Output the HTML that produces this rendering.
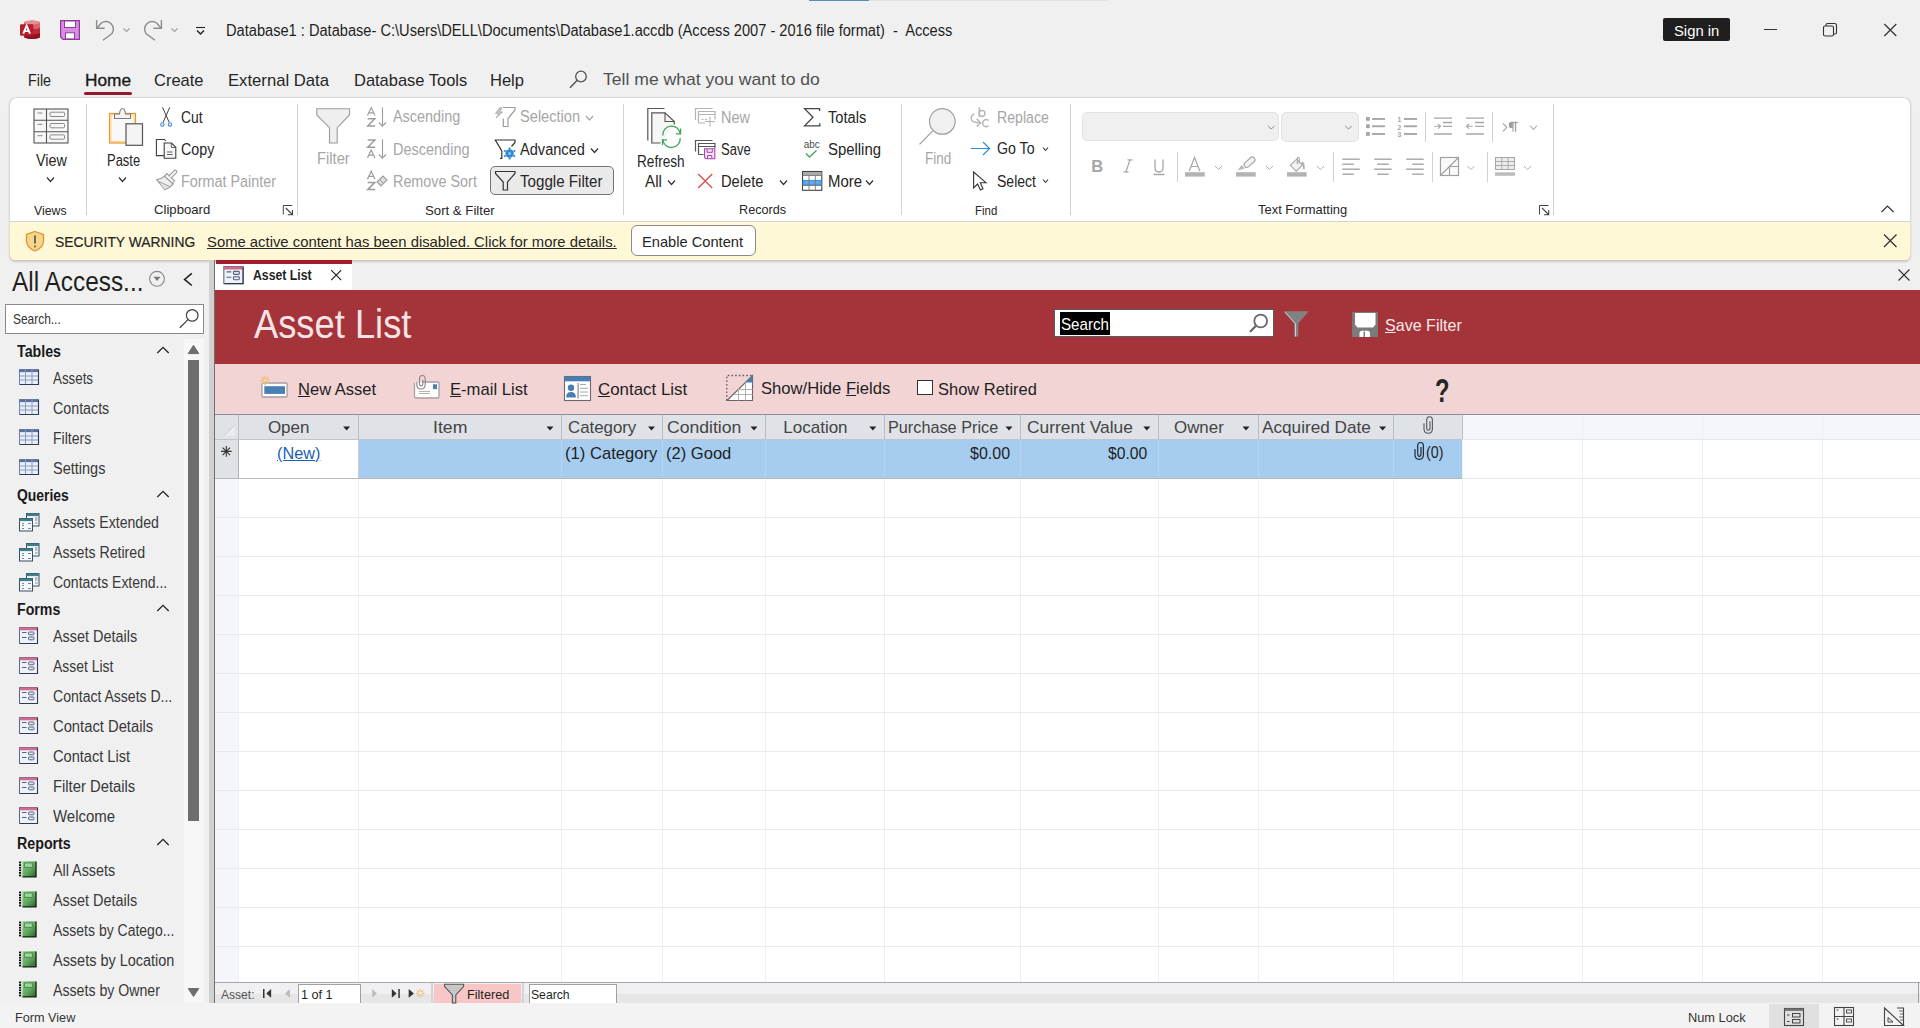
<!DOCTYPE html>
<html><head><meta charset="utf-8"><title>Access</title>
<style>
html,body{margin:0;padding:0;}
body{width:1920px;height:1028px;overflow:hidden;position:relative;background:#f0f0f0;font-family:"Liberation Sans",sans-serif;}
.t{position:absolute;white-space:pre;line-height:1;transform-origin:0 0;}
.r{position:absolute;}
.s{position:absolute;overflow:visible;}
u{text-decoration:underline;text-underline-offset:0.5px;text-decoration-thickness:1px;}
</style></head><body>
<div class="r" style="left:809px;top:0px;width:60px;height:1px;background:#5a8cc0;"></div>
<div class="r" style="left:869px;top:0px;width:240px;height:1px;background:#e3e3e3;"></div>
<div class="t" style="left:226.00px;top:22.76px;font-size:16px;color:#1f1f1f;transform:scaleX(0.9136);">Database1 : Database- C:\Users\DELL\Documents\Database1.accdb (Access 2007 - 2016 file format)  -  Access</div>
<div class="r" style="left:1663px;top:18px;width:67px;height:22.5px;background:#1f1f1f;border-radius:2px;"></div>
<div class="t" style="left:1674.00px;top:23.30px;font-size:15px;color:#ffffff;transform:scaleX(0.9869);">Sign in</div>
<div class="t" style="left:28.00px;top:71.61px;font-size:17px;color:#262626;transform:scaleX(0.8394);">File</div>
<div class="t" style="left:85.00px;top:71.61px;font-size:17px;color:#1a1a1a;transform:scaleX(1.0155);-webkit-text-stroke:0.35px #1a1a1a;">Home</div>
<div class="r" style="left:84px;top:92px;width:48px;height:3px;background:#911b2b;border-radius:2px;"></div>
<div class="t" style="left:154.00px;top:71.61px;font-size:17px;color:#262626;transform:scaleX(0.9706);">Create</div>
<div class="t" style="left:227.50px;top:71.61px;font-size:17px;color:#262626;transform:scaleX(0.9806);">External Data</div>
<div class="t" style="left:353.50px;top:71.61px;font-size:17px;color:#262626;transform:scaleX(0.9683);">Database Tools</div>
<div class="t" style="left:490.00px;top:71.61px;font-size:17px;color:#262626;transform:scaleX(0.9714);">Help</div>
<div class="t" style="left:603.40px;top:71.31px;font-size:17px;color:#505050;transform:scaleX(1.0338);">Tell me what you want to do</div>
<div class="r" style="left:9px;top:97px;width:1902px;height:163px;background:#ffffff;box-sizing:border-box;border:1px solid #dadada;border-bottom:none;border-radius:8px 8px 6px 6px;box-shadow:0 1.5px 2px rgba(0,0,0,0.16);"></div>
<div class="r" style="left:10px;top:221px;width:1900px;height:1px;background:#d4d4d4;"></div>
<div class="r" style="left:9px;top:222px;width:1902px;height:38px;background:#fff8d6;box-sizing:border-box;border:1px solid #e6e0c8;border-top:none;border-bottom:none;border-radius:0 0 6px 6px;"></div>
<div class="r" style="left:86px;top:104px;width:1px;height:111px;background:#d2d2d2;"></div>
<div class="r" style="left:297px;top:104px;width:1px;height:111px;background:#d2d2d2;"></div>
<div class="r" style="left:623px;top:104px;width:1px;height:111px;background:#d2d2d2;"></div>
<div class="r" style="left:901px;top:104px;width:1px;height:111px;background:#d2d2d2;"></div>
<div class="r" style="left:1070px;top:104px;width:1px;height:111px;background:#d2d2d2;"></div>
<div class="r" style="left:1553px;top:104px;width:1px;height:111px;background:#d2d2d2;"></div>
<div class="t" style="left:35.80px;top:152.76px;font-size:16px;color:#262626;transform:scaleX(0.8953);">View</div>
<div class="t" style="left:34.00px;top:204.17px;font-size:13.5px;color:#262626;transform:scaleX(0.9106);">Views</div>
<div class="t" style="left:106.60px;top:152.76px;font-size:16px;color:#262626;transform:scaleX(0.8093);">Paste</div>
<div class="t" style="left:181.40px;top:110.16px;font-size:16px;color:#262626;transform:scaleX(0.8675);">Cut</div>
<div class="t" style="left:181.40px;top:142.16px;font-size:16px;color:#262626;transform:scaleX(0.8904);">Copy</div>
<div class="t" style="left:181.40px;top:173.96px;font-size:16px;color:#a6a6a6;transform:scaleX(0.8979);">Format Painter</div>
<div class="t" style="left:153.75px;top:203.37px;font-size:13.5px;color:#262626;transform:scaleX(0.9732);">Clipboard</div>
<div class="t" style="left:317.00px;top:150.76px;font-size:16px;color:#a6a6a6;transform:scaleX(0.9213);">Filter</div>
<div class="t" style="left:392.80px;top:109.46px;font-size:16px;color:#a6a6a6;transform:scaleX(0.8996);">Ascending</div>
<div class="t" style="left:392.80px;top:142.16px;font-size:16px;color:#a6a6a6;transform:scaleX(0.9053);">Descending</div>
<div class="t" style="left:392.80px;top:173.96px;font-size:16px;color:#a6a6a6;transform:scaleX(0.8983);">Remove Sort</div>
<div class="t" style="left:520.40px;top:109.46px;font-size:16px;color:#a6a6a6;transform:scaleX(0.9134);">Selection</div>
<div class="t" style="left:520.40px;top:142.16px;font-size:16px;color:#262626;transform:scaleX(0.9115);">Advanced</div>
<div class="r" style="left:490.3px;top:166.2px;width:123.4px;height:29.2px;background:#eaeaea;box-sizing:border-box;border:1px solid #747474;border-radius:5px;"></div>
<div class="t" style="left:520.40px;top:173.96px;font-size:16px;color:#262626;transform:scaleX(0.9460);">Toggle Filter</div>
<div class="t" style="left:425.00px;top:203.67px;font-size:13.5px;color:#262626;transform:scaleX(0.9776);">Sort &amp; Filter</div>
<div class="t" style="left:636.60px;top:153.66px;font-size:16px;color:#262626;transform:scaleX(0.8500);">Refresh</div>
<div class="t" style="left:645.40px;top:174.06px;font-size:16px;color:#262626;transform:scaleX(0.9494);">All</div>
<div class="t" style="left:721.00px;top:109.86px;font-size:16px;color:#a6a6a6;transform:scaleX(0.9034);">New</div>
<div class="t" style="left:721.00px;top:141.86px;font-size:16px;color:#262626;transform:scaleX(0.8137);">Save</div>
<div class="t" style="left:721.00px;top:174.06px;font-size:16px;color:#262626;transform:scaleX(0.9179);">Delete</div>
<div class="t" style="left:827.70px;top:109.86px;font-size:16px;color:#262626;transform:scaleX(0.9163);">Totals</div>
<div class="t" style="left:827.70px;top:141.86px;font-size:16px;color:#262626;transform:scaleX(0.9297);">Spelling</div>
<div class="t" style="left:827.70px;top:174.06px;font-size:16px;color:#262626;transform:scaleX(0.9315);">More</div>
<div class="t" style="left:738.60px;top:203.37px;font-size:13.5px;color:#262626;transform:scaleX(0.9364);">Records</div>
<div class="t" style="left:924.70px;top:150.76px;font-size:16px;color:#a6a6a6;transform:scaleX(0.8457);">Find</div>
<div class="t" style="left:996.60px;top:109.96px;font-size:16px;color:#a6a6a6;transform:scaleX(0.8842);">Replace</div>
<div class="t" style="left:996.60px;top:141.46px;font-size:16px;color:#262626;transform:scaleX(0.8868);">Go To</div>
<div class="t" style="left:996.60px;top:173.56px;font-size:16px;color:#262626;transform:scaleX(0.8764);">Select</div>
<div class="t" style="left:974.70px;top:203.77px;font-size:13.5px;color:#262626;transform:scaleX(0.8479);">Find</div>
<div class="r" style="left:1081.5px;top:112.2px;width:197px;height:29.1px;background:#f0f0f0;box-sizing:border-box;border:1px solid #e3e3e3;border-radius:5px;"></div>
<div class="r" style="left:1281.3px;top:112px;width:77.5px;height:29.5px;background:#f0f0f0;box-sizing:border-box;border:1px solid #e3e3e3;border-radius:5px;"></div>
<div class="t" style="left:1257.50px;top:203.07px;font-size:13.5px;color:#262626;transform:scaleX(0.9591);">Text Formatting</div>
<div class="t" style="left:54.70px;top:233.68px;font-size:15.5px;color:#262626;transform:scaleX(0.8947);-webkit-text-stroke:0.2px #262626;">SECURITY WARNING</div>
<div class="t" style="left:207.20px;top:234.20px;font-size:15px;color:#262626;transform:scaleX(0.9887);text-decoration:underline;text-underline-offset:1px;">Some active content has been disabled. Click for more details.</div>
<div class="r" style="left:631px;top:225.2px;width:124.7px;height:31.3px;background:#ffffff;box-sizing:border-box;border:1px solid #8a8a8a;border-radius:6px;"></div>
<div class="t" style="left:642.00px;top:234.20px;font-size:15px;color:#262626;transform:scaleX(0.9768);">Enable Content</div>
<div class="r" style="left:209px;top:261px;width:5px;height:742px;background:#d1d1d1;"></div>
<div class="r" style="left:214px;top:260px;width:1px;height:743px;background:#6f6f6f;"></div>
<div class="t" style="left:11.60px;top:268.30px;font-size:28px;color:#1f1f1f;transform:scaleX(0.8708);">All Access...</div>
<div class="r" style="left:5.2px;top:304px;width:198.6px;height:29.7px;background:#ffffff;box-sizing:border-box;border:1px solid #8a8a8a;"></div>
<div class="t" style="left:12.90px;top:311.73px;font-size:14.5px;color:#333333;transform:scaleX(0.8224);">Search...</div>
<div class="r" style="left:183.6px;top:338.8px;width:20px;height:664px;background:#f7f7f7;"></div>
<div class="r" style="left:188px;top:360px;width:11px;height:460.7px;background:#6e6e6e;"></div>
<div class="t" style="left:16.60px;top:343.96px;font-size:16px;color:#1a1a1a;font-weight:bold;transform:scaleX(0.8889);">Tables</div>
<div class="t" style="left:53.40px;top:371.36px;font-size:16px;color:#383838;transform:scaleX(0.8333);">Assets</div>
<div class="t" style="left:53.40px;top:401.36px;font-size:16px;color:#383838;transform:scaleX(0.8906);">Contacts</div>
<div class="t" style="left:53.40px;top:431.36px;font-size:16px;color:#383838;transform:scaleX(0.8761);">Filters</div>
<div class="t" style="left:53.40px;top:461.36px;font-size:16px;color:#383838;transform:scaleX(0.9066);">Settings</div>
<div class="t" style="left:16.60px;top:487.96px;font-size:16px;color:#1a1a1a;font-weight:bold;transform:scaleX(0.8691);">Queries</div>
<div class="t" style="left:53.40px;top:515.36px;font-size:16px;color:#383838;transform:scaleX(0.8818);">Assets Extended</div>
<div class="t" style="left:53.40px;top:545.36px;font-size:16px;color:#383838;transform:scaleX(0.8846);">Assets Retired</div>
<div class="t" style="left:53.40px;top:575.36px;font-size:16px;color:#383838;transform:scaleX(0.8738);">Contacts Extend...</div>
<div class="t" style="left:16.60px;top:601.96px;font-size:16px;color:#1a1a1a;font-weight:bold;transform:scaleX(0.8855);">Forms</div>
<div class="t" style="left:53.40px;top:629.36px;font-size:16px;color:#383838;transform:scaleX(0.9015);">Asset Details</div>
<div class="t" style="left:53.40px;top:659.36px;font-size:16px;color:#383838;transform:scaleX(0.8703);">Asset List</div>
<div class="t" style="left:53.40px;top:689.36px;font-size:16px;color:#383838;transform:scaleX(0.8766);">Contact Assets D...</div>
<div class="t" style="left:53.40px;top:719.36px;font-size:16px;color:#383838;transform:scaleX(0.9226);">Contact Details</div>
<div class="t" style="left:53.40px;top:749.36px;font-size:16px;color:#383838;transform:scaleX(0.9124);">Contact List</div>
<div class="t" style="left:53.40px;top:779.36px;font-size:16px;color:#383838;transform:scaleX(0.9246);">Filter Details</div>
<div class="t" style="left:53.40px;top:809.36px;font-size:16px;color:#383838;transform:scaleX(0.9352);">Welcome</div>
<div class="t" style="left:16.60px;top:835.96px;font-size:16px;color:#1a1a1a;font-weight:bold;transform:scaleX(0.8893);">Reports</div>
<div class="t" style="left:53.40px;top:863.36px;font-size:16px;color:#383838;transform:scaleX(0.8948);">All Assets</div>
<div class="t" style="left:53.40px;top:893.36px;font-size:16px;color:#383838;transform:scaleX(0.9015);">Asset Details</div>
<div class="t" style="left:53.40px;top:923.36px;font-size:16px;color:#383838;transform:scaleX(0.8745);">Assets by Catego...</div>
<div class="t" style="left:53.40px;top:953.36px;font-size:16px;color:#383838;transform:scaleX(0.9032);">Assets by Location</div>
<div class="t" style="left:53.40px;top:983.36px;font-size:16px;color:#383838;transform:scaleX(0.8842);">Assets by Owner</div>
<div class="r" style="left:215.5px;top:260px;width:136px;height:4px;background:#a51d2d;"></div>
<div class="r" style="left:215px;top:264px;width:136.5px;height:26px;background:#ffffff;"></div>
<div class="t" style="left:253.30px;top:268.15px;font-size:14px;color:#1f1f1f;font-weight:bold;transform:scaleX(0.8774);">Asset List</div>
<div class="r" style="left:215px;top:290px;width:1705px;height:74px;background:#a4343a;"></div>
<div class="t" style="left:253.90px;top:303.94px;font-size:40px;color:#f4e4e5;transform:scaleX(0.9077);">Asset List</div>
<div class="r" style="left:1054.4px;top:309.4px;width:220px;height:28px;background:#ffffff;box-sizing:border-box;border:1px solid #5a5a5a;"></div>
<div class="r" style="left:1060px;top:312.2px;width:50px;height:22.4px;background:#000000;"></div>
<div class="t" style="left:1061.00px;top:315.61px;font-size:17px;color:#ffffff;transform:scaleX(0.8905);">Search</div>
<div class="t" style="left:1384.90px;top:317.31px;font-size:17px;color:#f8e8e8;transform:scaleX(0.9446);"><u>S</u>ave Filter</div>
<div class="r" style="left:215px;top:364px;width:1705px;height:50px;background:#f2d4d5;"></div>
<div class="t" style="left:298.40px;top:380.61px;font-size:17px;color:#1f1f1f;transform:scaleX(0.9726);"><u>N</u>ew Asset</div>
<div class="t" style="left:450.00px;top:380.61px;font-size:17px;color:#1f1f1f;transform:scaleX(0.9773);"><u>E</u>-mail List</div>
<div class="t" style="left:598.30px;top:380.61px;font-size:17px;color:#1f1f1f;transform:scaleX(0.9933);"><u>C</u>ontact List</div>
<div class="t" style="left:761.40px;top:380.21px;font-size:17px;color:#1f1f1f;transform:scaleX(0.9773);">Show/Hide <u>F</u>ields</div>
<div class="r" style="left:917.2px;top:380.3px;width:15.6px;height:15.2px;background:#ffffff;box-sizing:border-box;border:1px solid #333;"></div>
<div class="t" style="left:937.80px;top:380.81px;font-size:17px;color:#1f1f1f;transform:scaleX(0.9687);">Show Retired</div>
<div class="t" style="left:1434.50px;top:372.72px;font-size:34px;color:#262626;font-weight:bold;transform:scaleX(0.6971);">?</div>
<div class="r" style="left:215px;top:414px;width:1705px;height:568px;background:#ffffff;"></div>
<div class="r" style="left:215px;top:414px;width:1705px;height:1px;background:#8c8c9c;"></div>
<div class="r" style="left:215px;top:415px;width:1247px;height:24px;background:#dfe2e7;"></div>
<div class="r" style="left:1462px;top:415px;width:458px;height:24px;background:#f5f6fc;"></div>
<div class="r" style="left:215px;top:479px;width:23px;height:503px;background:#f5f6fc;"></div>
<div class="r" style="left:215px;top:439px;width:23px;height:39px;background:#dfe2e7;"></div>
<div class="r" style="left:359px;top:440px;width:1103px;height:38px;background:#a6cdf0;"></div>
<div class="r" style="left:238px;top:415px;width:1px;height:567px;background:#efefef;"></div>
<div class="r" style="left:358px;top:415px;width:1px;height:567px;background:#efefef;"></div>
<div class="r" style="left:561px;top:415px;width:1px;height:567px;background:#efefef;"></div>
<div class="r" style="left:662px;top:415px;width:1px;height:567px;background:#efefef;"></div>
<div class="r" style="left:765px;top:415px;width:1px;height:567px;background:#efefef;"></div>
<div class="r" style="left:884px;top:415px;width:1px;height:567px;background:#efefef;"></div>
<div class="r" style="left:1020px;top:415px;width:1px;height:567px;background:#efefef;"></div>
<div class="r" style="left:1158px;top:415px;width:1px;height:567px;background:#efefef;"></div>
<div class="r" style="left:1258px;top:415px;width:1px;height:567px;background:#efefef;"></div>
<div class="r" style="left:1393px;top:415px;width:1px;height:567px;background:#efefef;"></div>
<div class="r" style="left:1462px;top:415px;width:1px;height:567px;background:#efefef;"></div>
<div class="r" style="left:1582px;top:415px;width:1px;height:567px;background:#efefef;"></div>
<div class="r" style="left:1702px;top:415px;width:1px;height:567px;background:#efefef;"></div>
<div class="r" style="left:1822px;top:415px;width:1px;height:567px;background:#efefef;"></div>
<div class="r" style="left:238px;top:415px;width:1px;height:24px;background:#b8bcc4;"></div>
<div class="r" style="left:358px;top:415px;width:1px;height:24px;background:#b8bcc4;"></div>
<div class="r" style="left:561px;top:415px;width:1px;height:24px;background:#b8bcc4;"></div>
<div class="r" style="left:662px;top:415px;width:1px;height:24px;background:#b8bcc4;"></div>
<div class="r" style="left:765px;top:415px;width:1px;height:24px;background:#b8bcc4;"></div>
<div class="r" style="left:884px;top:415px;width:1px;height:24px;background:#b8bcc4;"></div>
<div class="r" style="left:1020px;top:415px;width:1px;height:24px;background:#b8bcc4;"></div>
<div class="r" style="left:1158px;top:415px;width:1px;height:24px;background:#b8bcc4;"></div>
<div class="r" style="left:1258px;top:415px;width:1px;height:24px;background:#b8bcc4;"></div>
<div class="r" style="left:1393px;top:415px;width:1px;height:24px;background:#b8bcc4;"></div>
<div class="r" style="left:1462px;top:415px;width:1px;height:24px;background:#b8bcc4;"></div>
<div class="r" style="left:238px;top:439px;width:1px;height:39px;background:#b0b0b0;"></div>
<div class="r" style="left:358px;top:439px;width:1px;height:39px;background:#c8d0d8;"></div>
<div class="r" style="left:561px;top:440px;width:1px;height:38px;background:#b8d4ee;"></div>
<div class="r" style="left:662px;top:440px;width:1px;height:38px;background:#b8d4ee;"></div>
<div class="r" style="left:765px;top:440px;width:1px;height:38px;background:#b8d4ee;"></div>
<div class="r" style="left:884px;top:440px;width:1px;height:38px;background:#b8d4ee;"></div>
<div class="r" style="left:1020px;top:440px;width:1px;height:38px;background:#b8d4ee;"></div>
<div class="r" style="left:1158px;top:440px;width:1px;height:38px;background:#b8d4ee;"></div>
<div class="r" style="left:1258px;top:440px;width:1px;height:38px;background:#b8d4ee;"></div>
<div class="r" style="left:1393px;top:440px;width:1px;height:38px;background:#b8d4ee;"></div>
<div class="r" style="left:215px;top:439px;width:1247px;height:1px;background:#c4c4c4;"></div>
<div class="r" style="left:1462px;top:439px;width:458px;height:1px;background:#e8e8e8;"></div>
<div class="r" style="left:215px;top:478px;width:1247px;height:1px;background:#b8b8b8;"></div>
<div class="r" style="left:1462px;top:478px;width:458px;height:1px;background:#e8e8e8;"></div>
<div class="r" style="left:215px;top:517px;width:1705px;height:1px;background:#eaeaea;"></div>
<div class="r" style="left:215px;top:556px;width:1705px;height:1px;background:#eaeaea;"></div>
<div class="r" style="left:215px;top:595px;width:1705px;height:1px;background:#eaeaea;"></div>
<div class="r" style="left:215px;top:634px;width:1705px;height:1px;background:#eaeaea;"></div>
<div class="r" style="left:215px;top:673px;width:1705px;height:1px;background:#eaeaea;"></div>
<div class="r" style="left:215px;top:712px;width:1705px;height:1px;background:#eaeaea;"></div>
<div class="r" style="left:215px;top:751px;width:1705px;height:1px;background:#eaeaea;"></div>
<div class="r" style="left:215px;top:790px;width:1705px;height:1px;background:#eaeaea;"></div>
<div class="r" style="left:215px;top:829px;width:1705px;height:1px;background:#eaeaea;"></div>
<div class="r" style="left:215px;top:868px;width:1705px;height:1px;background:#eaeaea;"></div>
<div class="r" style="left:215px;top:907px;width:1705px;height:1px;background:#eaeaea;"></div>
<div class="r" style="left:215px;top:946px;width:1705px;height:1px;background:#eaeaea;"></div>
<div class="t" style="left:267.90px;top:418.81px;font-size:17px;color:#444444;">Open</div>
<div class="t" style="left:433.30px;top:418.81px;font-size:17px;color:#444444;transform:scaleX(1.0393);">Item</div>
<div class="t" style="left:568.40px;top:418.81px;font-size:17px;color:#444444;transform:scaleX(0.9899);">Category</div>
<div class="t" style="left:667.20px;top:418.81px;font-size:17px;color:#444444;transform:scaleX(1.0348);">Condition</div>
<div class="t" style="left:783.30px;top:418.81px;font-size:17px;color:#444444;">Location</div>
<div class="t" style="left:888.30px;top:418.81px;font-size:17px;color:#444444;transform:scaleX(0.9558);">Purchase Price</div>
<div class="t" style="left:1027.00px;top:418.81px;font-size:17px;color:#444444;transform:scaleX(1.0212);">Current Value</div>
<div class="t" style="left:1174.20px;top:418.81px;font-size:17px;color:#444444;transform:scaleX(0.9940);">Owner</div>
<div class="t" style="left:1262.20px;top:418.81px;font-size:17px;color:#444444;transform:scaleX(1.0102);">Acquired Date</div>
<div class="t" style="left:277.40px;top:444.61px;font-size:17px;color:#1d5fb4;transform:scaleX(0.9558);text-decoration:underline;text-underline-offset:1px;">(New)</div>
<div class="t" style="left:565.40px;top:444.61px;font-size:17px;color:#1f1f1f;transform:scaleX(0.9767);">(1) Category</div>
<div class="t" style="left:666.40px;top:444.61px;font-size:17px;color:#1f1f1f;transform:scaleX(0.9732);">(2) Good</div>
<div class="t" style="left:970.00px;top:444.61px;font-size:17px;color:#1f1f1f;transform:scaleX(0.9412);">$0.00</div>
<div class="t" style="left:1108.40px;top:444.61px;font-size:17px;color:#1f1f1f;transform:scaleX(0.9224);">$0.00</div>
<div class="t" style="left:1426.00px;top:444.11px;font-size:17px;color:#1f1f1f;transform:scaleX(0.8413);">(0)</div>
<div class="r" style="left:215px;top:982px;width:1705px;height:1px;background:#a8a8a8;"></div>
<div class="r" style="left:215px;top:983px;width:1705px;height:11px;background:#f0f0f2;"></div>
<div class="r" style="left:215px;top:994px;width:1705px;height:9px;background:#e6e6e6;"></div>
<div class="t" style="left:221.20px;top:987.90px;font-size:13px;color:#555555;transform:scaleX(0.9280);">Asset:</div>
<div class="r" style="left:298px;top:984px;width:63px;height:19px;background:#ffffff;box-sizing:border-box;border:1px solid #a0a0a0;border-bottom:none;"></div>
<div class="t" style="left:301.00px;top:987.70px;font-size:13px;color:#1f1f1f;transform:scaleX(0.9723);">1 of 1</div>
<div class="r" style="left:431px;top:983px;width:2px;height:20px;background:#d4d4d4;"></div>
<div class="r" style="left:434px;top:984px;width:87px;height:19px;background:#f8c6c6;"></div>
<div class="t" style="left:467.40px;top:987.70px;font-size:13px;color:#1f1f1f;transform:scaleX(0.9746);">Filtered</div>
<div class="r" style="left:522px;top:983px;width:2px;height:20px;background:#d4d4d4;"></div>
<div class="r" style="left:529px;top:984px;width:88px;height:19px;background:#ffffff;box-sizing:border-box;border:1px solid #a0a0a0;border-bottom:none;"></div>
<div class="t" style="left:531.00px;top:987.70px;font-size:13px;color:#1f1f1f;transform:scaleX(0.9369);">Search</div>
<div class="r" style="left:1918px;top:982px;width:1px;height:21px;background:#a0a0a0;"></div>
<div class="r" style="left:0px;top:1003px;width:1920px;height:25px;background:#f3f3f3;"></div>
<div class="t" style="left:15.40px;top:1011.00px;font-size:13px;color:#333333;transform:scaleX(0.9742);">Form View</div>
<div class="t" style="left:1687.60px;top:1011.00px;font-size:13px;color:#333333;transform:scaleX(0.9846);">Num Lock</div>
<div class="r" style="left:1769px;top:1004px;width:49.8px;height:24px;background:#e0e0e0;"></div>
<svg class="s" style="left:20px;top:20px;" width="20" height="20" viewBox="0 0 20 20">
      <path d="M4.3 2.3 Q12.2 -0.6 20 2.3 V17.6 Q12.2 20.6 4.3 17.6 Z" fill="#a81b2b"/>
      <path d="M4.3 2.3 Q12.2 -0.6 20 2.3 V8.3 Q12.2 10.8 4.3 8.3 Z" fill="#d9646f"/>
      <path d="M4.3 8.3 Q12.2 10.8 20 8.3 V13.2 Q12.2 15.7 4.3 13.2 Z" fill="#bf2838"/>
      <path d="M4.3 13.2 Q12.2 15.7 20 13.2 V17.6 Q12.2 20.6 4.3 17.6 Z" fill="#8f1422"/>
      <ellipse cx="12.15" cy="2.4" rx="7.85" ry="1.9" fill="#e98b94"/>
      <rect x="0" y="4.2" width="13.3" height="11.6" rx="1.2" fill="#b91d2c"/>
      <path d="M3.3 13.7 L6.65 5.8 L10 13.7 M4.6 11.1 H8.7" stroke="#fff" stroke-width="1.9" fill="none"/>
    </svg>
<svg class="s" style="left:60px;top:20px;" width="20" height="20" viewBox="0 0 20 20">
      <path d="M0.6 0.6 H19.4 V19.4 H3 L0.6 17 Z" fill="#dc8ce2" stroke="#8e3c9c" stroke-width="1.2"/>
      <rect x="4.5" y="1" width="11" height="6.5" fill="#ffffff" stroke="#8e3c9c" stroke-width="1"/>
      <rect x="5.5" y="12.8" width="9" height="6.1" fill="#ffffff" stroke="#8e3c9c" stroke-width="1"/>
    </svg>
<svg class="s" style="left:0;top:0" width="220" height="50" viewBox="0 0 220 50"><path d="M96.8 28.2 L101.3 23 A7.6 7.6 0 0 1 112 33.5 L103 40.2" fill="none" stroke="#8c8c8c" stroke-width="1.4"/><path d="M96.6 20 V28.3 H104.6" fill="none" stroke="#8c8c8c" stroke-width="1.4"/><path d="M161.2 28.2 L156.7 23 A7.6 7.6 0 0 0 146 33.5 L155 40.2" fill="none" stroke="#8c8c8c" stroke-width="1.4"/><path d="M161.4 20 V28.3 H153.4" fill="none" stroke="#8c8c8c" stroke-width="1.4"/></svg><svg class="s" style="left:123px;top:28px;" width="7" height="4" viewBox="0 0 7 4"><path d="M0.5 0.5 L3.5 3.5 L6.5 0.5" fill="none" stroke="#a0a0a0" stroke-width="1.1"/></svg>
<svg class="s" style="left:171px;top:28px;" width="7" height="4" viewBox="0 0 7 4"><path d="M0.5 0.5 L3.5 3.5 L6.5 0.5" fill="none" stroke="#a0a0a0" stroke-width="1.1"/></svg>
<svg class="s" style="left:195px;top:25px;" width="11" height="11" viewBox="0 0 11 11"><path d="M1 2.5 H10" stroke="#222" stroke-width="1.1"/><path d="M2 5.5 L5.5 9 L9 5.5" fill="none" stroke="#222" stroke-width="1.4"/></svg>
<div class="r" style="left:1763.5px;top:29px;width:13.5px;height:1px;background:#333333;"></div>
<svg class="s" style="left:1822px;top:22px;" width="16" height="16" viewBox="0 0 16 16"><rect x="1.5" y="4" width="10" height="10" rx="1.5" fill="none" stroke="#333" stroke-width="1.1"/><path d="M4 4 V3 Q4 1.5 5.5 1.5 H12.5 Q14.5 1.5 14.5 3.5 V10.5 Q14.5 12 13 12 H12" fill="none" stroke="#333" stroke-width="1.1"/></svg>
<svg class="s" style="left:1882px;top:22px;" width="16" height="16" viewBox="0 0 16 16"><path d="M2.3 2 L14.3 14 M14.3 2 L2.3 14" stroke="#333" stroke-width="1.2"/></svg>
<svg class="s" style="left:569px;top:70px;" width="19" height="19" viewBox="0 0 19 19"><circle cx="12" cy="6.5" r="5.3" fill="none" stroke="#555" stroke-width="1.3"/><path d="M8.2 10.3 L1 17.8" stroke="#555" stroke-width="1.5"/></svg>
<svg class="s" style="left:0;top:0" width="1920" height="1028" viewBox="0 0 1920 1028"><rect x="34" y="109" width="34" height="34" fill="#f7f7f7" stroke="#555555" stroke-width="1.1"/><path d="M46.5 109 V143 M34 120.3 H68 M34 131.8 H68" stroke="#555555" stroke-width="1.1"/><path d="M37.5 113 H42.5" stroke="#8a8a8a" stroke-width="1"/><rect x="50" y="112.2" width="14.5" height="4.3" rx="1" fill="none" stroke="#8a8a8a" stroke-width="1"/><path d="M37.5 124.3 H42.5" stroke="#8a8a8a" stroke-width="1"/><rect x="50" y="123.5" width="14.5" height="4.3" rx="1" fill="none" stroke="#8a8a8a" stroke-width="1"/><path d="M37.5 135.7 H42.5" stroke="#8a8a8a" stroke-width="1"/><rect x="50" y="134.89999999999998" width="14.5" height="4.3" rx="1" fill="none" stroke="#8a8a8a" stroke-width="1"/><path d="M47 177.5 L50.5 181.5 L54 177.5" fill="none" stroke="#333" stroke-width="1.2"/><rect x="109.5" y="113.5" width="26" height="29.5" fill="#fdf3dc" stroke="#e8952d" stroke-width="1.2"/><rect x="111" y="115" width="23" height="26.5" fill="#f8f8f8" stroke="#f7cf86" stroke-width="0.9"/><path d="M114.5 118.5 V114 H119.5 Q120 108.5 122.5 108.5 Q125 108.5 125.5 114 H130.5 V118.5 Z" fill="#f3f3f3" stroke="#7d7d7d" stroke-width="1.1"/><rect x="126" y="123.8" width="16.5" height="21.5" fill="#f4f4f4" stroke="#555555" stroke-width="1.2"/><path d="M119 177.5 L122.5 181.5 L126 177.5" fill="none" stroke="#333" stroke-width="1.2"/><path d="M162.5 107.3 L169.3 122.5 M169.8 107.3 L163 122.5" stroke="#404040" stroke-width="1"/><circle cx="162.4" cy="124.4" r="1.7" fill="none" stroke="#3b8fd9" stroke-width="1.1"/><circle cx="169.9" cy="124.4" r="1.7" fill="none" stroke="#3b8fd9" stroke-width="1.1"/><path d="M164 155.6 H156.4 V139.5 H164.5 L165.6 141" fill="none" stroke="#404040" stroke-width="1.1"/><path d="M164.2 143 H171.5 L175.8 147.3 V158.3 H164.2 Z" fill="#f7f7f7" stroke="#404040" stroke-width="1.1"/><path d="M171.3 143 V147.5 H175.8 M167 152 H172.5 M167 154.5 H172.5" fill="none" stroke="#505050" stroke-width="0.9"/><path d="M156.6 179.6 Q161.5 179.2 164.5 176.2 L173.3 184 Q169.5 188 164.8 189.7 Z" fill="#efefef" stroke="#9c9c9c" stroke-width="1.1" stroke-linejoin="round"/><path d="M158.3 181.4 L169.6 186.4" stroke="#9c9c9c" stroke-width="1"/><path d="M160 183.5 L164.8 189.4 L169.2 186.6 Z" fill="#dedede"/><path d="M164.5 176.2 L166.8 173.6 L174.6 180.8 L172.3 183.3 Z" fill="#f6f6f6" stroke="#9c9c9c" stroke-width="1.1"/><path d="M169 175.8 L173.9 170.8 Q175.3 169.6 176.4 170.7 Q177.4 171.9 176.2 173.1 L171.3 177.9" fill="#f6f6f6" stroke="#9c9c9c" stroke-width="1.1"/><path d="M316.8 108.8 H349.5 V115 L337.2 127.7 V143 H329.5 V127.7 L316.8 115 Z" fill="#efefef" stroke="#9c9c9c" stroke-width="1.1"/><path d="M367.5 115.6 L371.2 107.6 L375 115.6 M368.8 112.8 H373.7" fill="none" stroke="#9c9c9c" stroke-width="1.2"/><path d="M367.7 118.79999999999998 H374.8 L367.7 125.99999999999999 H375.2" fill="none" stroke="#9c9c9c" stroke-width="1.5"/><path d="M382.5 107.5 V126 M379 122.5 L382.5 126.2 L386 122.5" fill="none" stroke="#9c9c9c" stroke-width="1.1"/><path d="M367.7 140.0 H374.8 L367.7 147.20000000000002 H375.2" fill="none" stroke="#9c9c9c" stroke-width="1.5"/><path d="M367.5 158.0 L371.2 150.0 L375 158.0 M368.8 155.2 H373.7" fill="none" stroke="#9c9c9c" stroke-width="1.2"/><path d="M382.5 139.3 V158 M379 154.5 L382.5 158.2 L386 154.5" fill="none" stroke="#9c9c9c" stroke-width="1.1"/><path d="M367.5 179.2 L371.2 171.2 L375 179.2 M368.8 176.39999999999998 H373.7" fill="none" stroke="#9c9c9c" stroke-width="1.2"/><path d="M367.7 182.39999999999998 H374.8 L367.7 189.6 H375.2" fill="none" stroke="#9c9c9c" stroke-width="1.5"/><path d="M377 182 L383 176 L387 180 L381 186 Z" fill="#dddddd" stroke="#9c9c9c" stroke-width="1.1"/><path d="M379.5 179.5 L383.5 183.5" stroke="#9c9c9c" stroke-width="1"/><path d="M503 107.5 H515 V110 L508 118.5 V126.5 H503.3 V118.5" fill="none" stroke="#9c9c9c" stroke-width="1.2"/><path d="M499.5 107.8 L495.5 113.5 H499 L496 118 L502.5 112 H499.5 L502 107.8 Z" fill="#c8c8c8" stroke="#9c9c9c" stroke-width="0.7"/><path d="M586 116 L589.5 120 L593 116" fill="none" stroke="#a6a6a6" stroke-width="1.2"/><path d="M500 158.3 H501.8 V151 L495.3 140 H515 V142.5 L511.5 146.5" fill="none" stroke="#333" stroke-width="1.2"/><circle cx="509.6" cy="153.5" r="4.2" fill="#2f8ad6"/><circle cx="509.6" cy="153.5" r="1.5" fill="#ffffff" opacity="0.5"/><path d="M509.6 147.5 V149.5 M509.6 157.5 V159.5 M504 150.5 L505.8 151.5 M513.4 155.5 L515.2 156.5 M504 156.5 L505.8 155.5 M513.4 151.5 L515.2 150.5" stroke="#2f8ad6" stroke-width="1.8"/><path d="M591 148.5 L594.5 152.5 L598 148.5" fill="none" stroke="#333" stroke-width="1.2"/><path d="M495.5 171.5 H515 V173.5 L507.5 182 V190 H503.2 V182 L495.5 173.5 Z" fill="none" stroke="#333" stroke-width="1.2"/><path d="M664.5 108.5 H647.8 V140.5" fill="none" stroke="#555" stroke-width="1.2"/><path d="M660.5 143 H651.8 V112.8 H665 L674.3 121.5 V124.5" fill="#f6f6f6" stroke="#555" stroke-width="1.2"/><path d="M665 112.8 V121.5 H674.3" fill="none" stroke="#555" stroke-width="1.1"/><path d="M662.8 135.5 A8.6 8.6 0 0 1 680.2 134 M680.2 138 A8.6 8.6 0 0 1 662.8 139.5" fill="none" stroke="#3fa55d" stroke-width="1.3"/><path d="M676 133.8 H680.6 V128.5 M667 139.8 H662.5 V145" fill="none" stroke="#3fa55d" stroke-width="1.3"/><path d="M668 180.5 L671.5 184.5 L675 180.5" fill="none" stroke="#333" stroke-width="1.2"/><path d="M695.5 120 V108.5 H712.5 M698.5 123 V111.5 H715 V119.5 M698.5 114.5 H715 M698.5 123 H705" fill="none" stroke="#b4b4b4" stroke-width="1.2"/><path d="M701.5 119.5 H703.5 M705 119.5 H707 M710 116.5 V126.5 M705 121.5 H715" fill="none" stroke="#b4b4b4" stroke-width="1.1"/><path d="M695.5 151.5 V140.5 H712.5 M698.5 154.5 V143.5 H715 V148 M698.5 146.5 H715 M698.5 154.5 H703.5" fill="none" stroke="#555" stroke-width="1.2"/><path d="M704.5 148.8 H714.8 V158.8 H705.8 L704.5 157.5 Z" fill="#f3e3f4" stroke="#a248b0" stroke-width="1.1"/><path d="M707 149 V152.3 H712.3 V149 M707.5 158.8 V155.5 H711.8 V158.8" fill="none" stroke="#a248b0" stroke-width="1"/><path d="M698.2 174 L712.2 188 M712.2 174 L698.2 188" stroke="#df4b4b" stroke-width="1.3"/><path d="M780 180.5 L783.5 184.5 L787 180.5" fill="none" stroke="#333" stroke-width="1.2"/><path d="M819.6 111 V108.6 H804.6 L813 117.3 L804.6 125.8 H819.8 V123.3" fill="none" stroke="#444" stroke-width="1.3"/><text x="803.8" y="148.3" font-family="Liberation Sans" font-size="11.5" fill="#4a4a4a" textLength="16" lengthAdjust="spacingAndGlyphs">abc</text><path d="M806 153.5 L809.5 157 L816.5 150.5" fill="none" stroke="#3fa55d" stroke-width="1.3"/><rect x="802.5" y="171.5" width="19.3" height="18.8" fill="#ffffff" stroke="#444" stroke-width="1.1"/><rect x="803" y="172" width="18.3" height="3.2" fill="#a9a9a9"/><rect x="803" y="180.3" width="18.3" height="4.6" fill="#5ca9ec" stroke="#2f7fd0" stroke-width="0.8"/><path d="M802.5 175.5 H821.8 M802.5 185.5 H821.8 M809 175.5 V190.3 M815.3 175.5 V190.3" stroke="#777" stroke-width="0.9"/><path d="M866 180.5 L869.5 184.5 L873 180.5" fill="none" stroke="#333" stroke-width="1.2"/><circle cx="942.3" cy="121.4" r="12.8" fill="#f0f0f0" stroke="#a0a0a0" stroke-width="1.2"/><path d="M932.8 130.9 L919.5 144.4" stroke="#a0a0a0" stroke-width="1.3"/><path d="M979.3 107.3 V116.6" stroke="#b8b8b8" stroke-width="1.6"/><circle cx="982.1" cy="113.5" r="2.9" fill="none" stroke="#b8b8b8" stroke-width="1.5"/><path d="M988.5 120.6 A3.4 3.6 0 1 0 988.5 125.8" fill="none" stroke="#b8b8b8" stroke-width="1.5"/><path d="M974.3 113.8 Q970.5 115.8 971.3 119.5 Q972.3 122.7 980.3 122.7 M976.6 118.7 L980.6 122.7 L976.6 126.8" fill="none" stroke="#b8b8b8" stroke-width="1.5"/><path d="M971 148.5 H989.5 M983 142 L989.6 148.5 L983 155" fill="none" stroke="#2f8ad6" stroke-width="1.2"/><path d="M1043 147.5 L1045.5 150.5 L1048 147.5" fill="none" stroke="#333" stroke-width="1.1"/><path d="M973.6 172 V188 L977.6 184 L980.4 190 L983 188.8 L980.3 182.7 L986 182.7 Z" fill="#ffffff" stroke="#333" stroke-width="1.1" stroke-linejoin="miter"/><path d="M1043 179.5 L1045.5 182.5 L1048 179.5" fill="none" stroke="#333" stroke-width="1.1"/><path d="M1268 125.8 L1271.25 129.1 L1274.5 125.8" fill="none" stroke="#8a8a8a" stroke-width="1"/><path d="M1345.3 125.8 L1348.55 129.1 L1351.8 125.8" fill="none" stroke="#8a8a8a" stroke-width="1"/><text x="1091.2" y="172" font-family="Liberation Sans" font-weight="bold" font-size="16.5" fill="#a6a6a6">B</text><path d="M1127.5 159.8 H1132.5 M1123.5 171.8 H1128.5 M1130 159.8 L1126 171.8" fill="none" stroke="#a6a6a6" stroke-width="1.2"/><path d="M1155 159.5 V167.5 Q1155 172 1159 172 Q1163 172 1163 167.5 V159.5 M1153.5 174.5 H1164.5" fill="none" stroke="#a6a6a6" stroke-width="1.3"/><rect x="1177" y="152" width="1" height="30" fill="#d0d0d0"/><path d="M1189.3 171 L1194.5 157.5 L1199.8 171 M1191 166.5 H1198" fill="none" stroke="#a6a6a6" stroke-width="1.2"/><rect x="1185" y="172.2" width="19.7" height="4.4" fill="#b3b3b3"/><path d="M1215 166 L1218.5 169.5 L1222 166" fill="none" stroke="#b0b0b0" stroke-width="1"/><g transform="rotate(-42 1249.5 162.3)"><rect x="1243.3" y="159.6" width="12.6" height="5.4" rx="2.6" fill="#f2f2f2" stroke="#a6a6a6" stroke-width="1.1"/></g><path d="M1237.6 170.6 L1241.5 165 L1244.8 168.5 Z" fill="#b8b8b8"/><rect x="1236" y="172.2" width="19.7" height="4.4" fill="#b3b3b3"/><path d="M1266 166 L1269.5 169.5 L1273 166" fill="none" stroke="#b0b0b0" stroke-width="1"/><path d="M1290.3 165.3 L1296.6 159.2 L1302.5 165.1 L1296.2 171.2 Z" fill="#f2f2f2" stroke="#a6a6a6" stroke-width="1.1"/><path d="M1297.3 164.3 V158.5 Q1297.6 157 1298.8 157.6 Q1299.6 158.2 1299.3 163.5" fill="none" stroke="#a6a6a6" stroke-width="1.1"/><path d="M1301.5 162.5 Q1302.2 161.2 1303.4 162 Q1304.8 163.5 1304.8 169.3 L1303.2 169.3 Q1303 165.5 1301.5 164.5 Z" fill="#b0b0b0"/><rect x="1287" y="172.2" width="19.7" height="4.4" fill="#b3b3b3"/><path d="M1317 166 L1320.5 169.5 L1324 166" fill="none" stroke="#b0b0b0" stroke-width="1"/><rect x="1333" y="152" width="1" height="30" fill="#d0d0d0"/><rect x="1342.3" y="158.5" width="17.5" height="1.4" fill="#a6a6a6"/><rect x="1342.3" y="163.5" width="11.5" height="1.4" fill="#a6a6a6"/><rect x="1342.3" y="168.5" width="17.5" height="1.4" fill="#a6a6a6"/><rect x="1342.3" y="173.5" width="11.5" height="1.4" fill="#a6a6a6"/><rect x="1374.2" y="158.5" width="17.5" height="1.4" fill="#a6a6a6"/><rect x="1377.2" y="163.5" width="11.5" height="1.4" fill="#a6a6a6"/><rect x="1374.2" y="168.5" width="17.5" height="1.4" fill="#a6a6a6"/><rect x="1377.2" y="173.5" width="11.5" height="1.4" fill="#a6a6a6"/><rect x="1406.2" y="158.5" width="17.5" height="1.4" fill="#a6a6a6"/><rect x="1412.2" y="163.5" width="11.5" height="1.4" fill="#a6a6a6"/><rect x="1406.2" y="168.5" width="17.5" height="1.4" fill="#a6a6a6"/><rect x="1412.2" y="173.5" width="11.5" height="1.4" fill="#a6a6a6"/><rect x="1432" y="152" width="1" height="30" fill="#d0d0d0"/><rect x="1440.5" y="157.5" width="18" height="18" fill="#fafafa" stroke="#a0a0a0" stroke-width="1.2"/><path d="M1440.5 175.5 L1458.5 157.5 M1449.5 175.5 V166.5 H1458.5" fill="none" stroke="#a0a0a0" stroke-width="1.1"/><path d="M1467.5 166 L1471.0 169.5 L1474.5 166" fill="none" stroke="#b0b0b0" stroke-width="1"/><rect x="1487" y="152" width="1" height="30" fill="#d0d0d0"/><rect x="1495.5" y="157.5" width="19" height="12" fill="#ececec" stroke="#a6a6a6" stroke-width="1"/><path d="M1495.5 161.5 H1514.5 M1495.5 165.5 H1514.5 M1501.8 157.5 V169.5 M1508.2 157.5 V169.5" stroke="#a6a6a6" stroke-width="0.9"/><rect x="1495" y="172.3" width="20" height="3.5" fill="#bdbdbd"/><path d="M1524 166 L1527.5 169.5 L1531 166" fill="none" stroke="#b0b0b0" stroke-width="1"/><rect x="1366" y="117.0" width="3.8" height="3.8" fill="#a6a6a6"/><rect x="1372" y="118.0" width="13" height="1.9" fill="#a6a6a6"/><rect x="1366" y="124.3" width="3.8" height="3.8" fill="#a6a6a6"/><rect x="1372" y="125.3" width="13" height="1.9" fill="#a6a6a6"/><rect x="1366" y="132.0" width="3.8" height="3.8" fill="#a6a6a6"/><rect x="1372" y="133.0" width="13" height="1.9" fill="#a6a6a6"/><text x="1397.3" y="122.2" font-family="Liberation Sans" font-weight="bold" font-size="7.5" fill="#aaaaaa">1</text><rect x="1404" y="118.0" width="13" height="1.9" fill="#a6a6a6"/><text x="1397.3" y="129.5" font-family="Liberation Sans" font-weight="bold" font-size="7.5" fill="#aaaaaa">2</text><rect x="1404" y="125.3" width="13" height="1.9" fill="#a6a6a6"/><text x="1397.3" y="137.20000000000002" font-family="Liberation Sans" font-weight="bold" font-size="7.5" fill="#aaaaaa">3</text><rect x="1404" y="133.0" width="13" height="1.9" fill="#a6a6a6"/><rect x="1425" y="112" width="1" height="30" fill="#d0d0d0"/><path d="M1434 118.2 H1452 M1443 122.5 H1452 M1443 126.3 H1452 M1434 134 H1452" stroke="#a6a6a6" stroke-width="1.3"/><path d="M1434 126.3 H1440 M1438 124 L1440.5 126.3 L1438 128.6" fill="none" stroke="#a6a6a6" stroke-width="1.1"/><path d="M1466 118.2 H1484 M1475 122.5 H1484 M1475 126.3 H1484 M1466 134 H1484" stroke="#a6a6a6" stroke-width="1.3"/><path d="M1466.5 126.3 H1472.5 M1469 124 L1466.5 126.3 L1469 128.6" fill="none" stroke="#a6a6a6" stroke-width="1.1"/><rect x="1492" y="112" width="1" height="30" fill="#d0d0d0"/><path d="M1503 123.3 L1506.8 127.3 L1503 131.3" fill="none" stroke="#a6a6a6" stroke-width="1.2"/><path d="M1513.2 122 H1510.8 Q1508.8 122 1508.8 125 Q1508.8 128 1510.8 128 H1513.2 Z" fill="#9c9c9c"/><rect x="1512.3" y="122" width="1.3" height="9.8" fill="#b0b0b0"/><rect x="1514.9" y="122" width="1.3" height="9.8" fill="#a0a0a0"/><rect x="1510.8" y="121.8" width="7" height="1.3" fill="#a0a0a0"/><path d="M1530 125.6 L1533.5 129.4 L1537 125.6" fill="none" stroke="#b0b0b0" stroke-width="1.1"/><path d="M283.3 214.5 V205.5 H292.3" fill="none" stroke="#444" stroke-width="1"/><path d="M285.8 208 L292.3 214.5 M292.5 210 V214.7 H287.8" fill="none" stroke="#444" stroke-width="1.1"/><path d="M1539.5 214.5 V205.5 H1548.5" fill="none" stroke="#444" stroke-width="1"/><path d="M1542 208 L1548.5 214.5 M1548.7 210 V214.7 H1544" fill="none" stroke="#444" stroke-width="1.1"/><path d="M1881.5 212 L1887.5 206 L1893.5 212" fill="none" stroke="#333" stroke-width="1.2"/><path d="M35 231.5 L43.5 234.5 V241 Q43.5 247.5 35 251 Q26.5 247.5 26.5 241 V234.5 Z" fill="#f5d78c" stroke="#e3922b" stroke-width="1.3"/><path d="M35 235.5 V243.5" stroke="#444" stroke-width="1.5"/><circle cx="35" cy="246.5" r="0.9" fill="#444"/><path d="M1884 234.5 L1896.5 247 M1896.5 234.5 L1884 247" stroke="#333" stroke-width="1.3"/></svg>
<svg class="s" style="left:0;top:0" width="1920" height="1028" viewBox="0 0 1920 1028"><defs><linearGradient id="rg" x1="0" y1="0" x2="1" y2="1"><stop offset="0" stop-color="#8fcf8f"/><stop offset="0.55" stop-color="#5ea65e"/><stop offset="1" stop-color="#2d5a2d"/></linearGradient></defs><circle cx="157" cy="278.8" r="7.4" fill="none" stroke="#8a8a8a" stroke-width="1.1"/><path d="M153.5 276.8 H160.5 L157 281 Z" fill="#777"/><path d="M191.8 273.3 L184.6 279.4 L191.8 285.5" fill="none" stroke="#222" stroke-width="1.6"/><circle cx="192.2" cy="315.4" r="5.8" fill="none" stroke="#444" stroke-width="1.2"/><path d="M188 319.6 L179.8 327.8" stroke="#444" stroke-width="1.3"/><path d="M188.2 353.6 L193.5 345.3 L198.8 353.6 Z" fill="#6e6e6e" stroke="#6e6e6e" stroke-width="1" stroke-linejoin="round"/><path d="M188.2 988.5 L193.5 996.5 L198.8 988.5 Z" fill="#6e6e6e" stroke="#6e6e6e" stroke-width="1" stroke-linejoin="round"/><path d="M157.3 353 L163 347.3 L168.7 353" fill="none" stroke="#222" stroke-width="1.3"/><g transform="translate(19,369)"><rect x="0.5" y="0.5" width="19" height="15" fill="#e8eefb" stroke="#6f82a8" stroke-width="1"/><rect x="0.5" y="0.5" width="19" height="2.6" fill="#5b6f9c"/><path d="M6.5 0.5 V15.5 M13 0.5 V15.5 M0.5 7 H19.5 M0.5 11 H19.5" stroke="#8d9bb8" stroke-width="1"/><path d="M19.5 1 V15.5 H1" fill="none" stroke="#2e3b52" stroke-width="1.1"/></g><g transform="translate(19,399)"><rect x="0.5" y="0.5" width="19" height="15" fill="#e8eefb" stroke="#6f82a8" stroke-width="1"/><rect x="0.5" y="0.5" width="19" height="2.6" fill="#5b6f9c"/><path d="M6.5 0.5 V15.5 M13 0.5 V15.5 M0.5 7 H19.5 M0.5 11 H19.5" stroke="#8d9bb8" stroke-width="1"/><path d="M19.5 1 V15.5 H1" fill="none" stroke="#2e3b52" stroke-width="1.1"/></g><g transform="translate(19,429)"><rect x="0.5" y="0.5" width="19" height="15" fill="#e8eefb" stroke="#6f82a8" stroke-width="1"/><rect x="0.5" y="0.5" width="19" height="2.6" fill="#5b6f9c"/><path d="M6.5 0.5 V15.5 M13 0.5 V15.5 M0.5 7 H19.5 M0.5 11 H19.5" stroke="#8d9bb8" stroke-width="1"/><path d="M19.5 1 V15.5 H1" fill="none" stroke="#2e3b52" stroke-width="1.1"/></g><g transform="translate(19,459)"><rect x="0.5" y="0.5" width="19" height="15" fill="#e8eefb" stroke="#6f82a8" stroke-width="1"/><rect x="0.5" y="0.5" width="19" height="2.6" fill="#5b6f9c"/><path d="M6.5 0.5 V15.5 M13 0.5 V15.5 M0.5 7 H19.5 M0.5 11 H19.5" stroke="#8d9bb8" stroke-width="1"/><path d="M19.5 1 V15.5 H1" fill="none" stroke="#2e3b52" stroke-width="1.1"/></g><path d="M157.3 497 L163 491.3 L168.7 497" fill="none" stroke="#222" stroke-width="1.3"/><g transform="translate(19,513)"><rect x="7.5" y="0.5" width="12.5" height="12.5" fill="#f4f8fc" stroke="#3a4f5e" stroke-width="1"/><rect x="7.5" y="0.5" width="12.5" height="2.6" fill="#3f8088"/><path d="M16 5 H18.5 M16 7 H18.5 M16 10 H18.5" stroke="#6b7b8c" stroke-width="0.9"/><rect x="0.5" y="5.5" width="13" height="12.5" fill="#f4f8fc" stroke="#3a4f5e" stroke-width="1"/><rect x="0.5" y="5.5" width="13" height="2.6" fill="#3f8088"/><path d="M3 10.5 H5 M3 12.5 H5 M3 15.5 H5 M9 10.5 H12 M9 15.5 H12" stroke="#6b7b8c" stroke-width="0.9"/></g><g transform="translate(19,543)"><rect x="7.5" y="0.5" width="12.5" height="12.5" fill="#f4f8fc" stroke="#3a4f5e" stroke-width="1"/><rect x="7.5" y="0.5" width="12.5" height="2.6" fill="#3f8088"/><path d="M16 5 H18.5 M16 7 H18.5 M16 10 H18.5" stroke="#6b7b8c" stroke-width="0.9"/><rect x="0.5" y="5.5" width="13" height="12.5" fill="#f4f8fc" stroke="#3a4f5e" stroke-width="1"/><rect x="0.5" y="5.5" width="13" height="2.6" fill="#3f8088"/><path d="M3 10.5 H5 M3 12.5 H5 M3 15.5 H5 M9 10.5 H12 M9 15.5 H12" stroke="#6b7b8c" stroke-width="0.9"/></g><g transform="translate(19,573)"><rect x="7.5" y="0.5" width="12.5" height="12.5" fill="#f4f8fc" stroke="#3a4f5e" stroke-width="1"/><rect x="7.5" y="0.5" width="12.5" height="2.6" fill="#3f8088"/><path d="M16 5 H18.5 M16 7 H18.5 M16 10 H18.5" stroke="#6b7b8c" stroke-width="0.9"/><rect x="0.5" y="5.5" width="13" height="12.5" fill="#f4f8fc" stroke="#3a4f5e" stroke-width="1"/><rect x="0.5" y="5.5" width="13" height="2.6" fill="#3f8088"/><path d="M3 10.5 H5 M3 12.5 H5 M3 15.5 H5 M9 10.5 H12 M9 15.5 H12" stroke="#6b7b8c" stroke-width="0.9"/></g><path d="M157.3 611 L163 605.3 L168.7 611" fill="none" stroke="#222" stroke-width="1.3"/><g transform="translate(19,627) scale(1)"><rect x="0.5" y="0.5" width="18" height="16" fill="#eef2fc" stroke="#5b6880" stroke-width="1"/><rect x="0.5" y="0.5" width="18" height="2.8" fill="#cf6c8e"/><path d="M3 5.5 H7.5 M3 10.5 H7.5" stroke="#5b6474" stroke-width="1.1"/><rect x="9.5" y="5" width="5.5" height="2.8" rx="0.8" fill="#dfe7fa" stroke="#5b6474" stroke-width="1"/><rect x="9.5" y="10" width="5.5" height="2.8" rx="0.8" fill="#dfe7fa" stroke="#5b6474" stroke-width="1"/><path d="M18.5 1 V16.5 H1" fill="none" stroke="#2e3b52" stroke-width="1.1"/></g><g transform="translate(19,657) scale(1)"><rect x="0.5" y="0.5" width="18" height="16" fill="#eef2fc" stroke="#5b6880" stroke-width="1"/><rect x="0.5" y="0.5" width="18" height="2.8" fill="#cf6c8e"/><path d="M3 5.5 H7.5 M3 10.5 H7.5" stroke="#5b6474" stroke-width="1.1"/><rect x="9.5" y="5" width="5.5" height="2.8" rx="0.8" fill="#dfe7fa" stroke="#5b6474" stroke-width="1"/><rect x="9.5" y="10" width="5.5" height="2.8" rx="0.8" fill="#dfe7fa" stroke="#5b6474" stroke-width="1"/><path d="M18.5 1 V16.5 H1" fill="none" stroke="#2e3b52" stroke-width="1.1"/></g><g transform="translate(19,687) scale(1)"><rect x="0.5" y="0.5" width="18" height="16" fill="#eef2fc" stroke="#5b6880" stroke-width="1"/><rect x="0.5" y="0.5" width="18" height="2.8" fill="#cf6c8e"/><path d="M3 5.5 H7.5 M3 10.5 H7.5" stroke="#5b6474" stroke-width="1.1"/><rect x="9.5" y="5" width="5.5" height="2.8" rx="0.8" fill="#dfe7fa" stroke="#5b6474" stroke-width="1"/><rect x="9.5" y="10" width="5.5" height="2.8" rx="0.8" fill="#dfe7fa" stroke="#5b6474" stroke-width="1"/><path d="M18.5 1 V16.5 H1" fill="none" stroke="#2e3b52" stroke-width="1.1"/></g><g transform="translate(19,717) scale(1)"><rect x="0.5" y="0.5" width="18" height="16" fill="#eef2fc" stroke="#5b6880" stroke-width="1"/><rect x="0.5" y="0.5" width="18" height="2.8" fill="#cf6c8e"/><path d="M3 5.5 H7.5 M3 10.5 H7.5" stroke="#5b6474" stroke-width="1.1"/><rect x="9.5" y="5" width="5.5" height="2.8" rx="0.8" fill="#dfe7fa" stroke="#5b6474" stroke-width="1"/><rect x="9.5" y="10" width="5.5" height="2.8" rx="0.8" fill="#dfe7fa" stroke="#5b6474" stroke-width="1"/><path d="M18.5 1 V16.5 H1" fill="none" stroke="#2e3b52" stroke-width="1.1"/></g><g transform="translate(19,747) scale(1)"><rect x="0.5" y="0.5" width="18" height="16" fill="#eef2fc" stroke="#5b6880" stroke-width="1"/><rect x="0.5" y="0.5" width="18" height="2.8" fill="#cf6c8e"/><path d="M3 5.5 H7.5 M3 10.5 H7.5" stroke="#5b6474" stroke-width="1.1"/><rect x="9.5" y="5" width="5.5" height="2.8" rx="0.8" fill="#dfe7fa" stroke="#5b6474" stroke-width="1"/><rect x="9.5" y="10" width="5.5" height="2.8" rx="0.8" fill="#dfe7fa" stroke="#5b6474" stroke-width="1"/><path d="M18.5 1 V16.5 H1" fill="none" stroke="#2e3b52" stroke-width="1.1"/></g><g transform="translate(19,777) scale(1)"><rect x="0.5" y="0.5" width="18" height="16" fill="#eef2fc" stroke="#5b6880" stroke-width="1"/><rect x="0.5" y="0.5" width="18" height="2.8" fill="#cf6c8e"/><path d="M3 5.5 H7.5 M3 10.5 H7.5" stroke="#5b6474" stroke-width="1.1"/><rect x="9.5" y="5" width="5.5" height="2.8" rx="0.8" fill="#dfe7fa" stroke="#5b6474" stroke-width="1"/><rect x="9.5" y="10" width="5.5" height="2.8" rx="0.8" fill="#dfe7fa" stroke="#5b6474" stroke-width="1"/><path d="M18.5 1 V16.5 H1" fill="none" stroke="#2e3b52" stroke-width="1.1"/></g><g transform="translate(19,807) scale(1)"><rect x="0.5" y="0.5" width="18" height="16" fill="#eef2fc" stroke="#5b6880" stroke-width="1"/><rect x="0.5" y="0.5" width="18" height="2.8" fill="#cf6c8e"/><path d="M3 5.5 H7.5 M3 10.5 H7.5" stroke="#5b6474" stroke-width="1.1"/><rect x="9.5" y="5" width="5.5" height="2.8" rx="0.8" fill="#dfe7fa" stroke="#5b6474" stroke-width="1"/><rect x="9.5" y="10" width="5.5" height="2.8" rx="0.8" fill="#dfe7fa" stroke="#5b6474" stroke-width="1"/><path d="M18.5 1 V16.5 H1" fill="none" stroke="#2e3b52" stroke-width="1.1"/></g><path d="M157.3 845 L163 839.3 L168.7 845" fill="none" stroke="#222" stroke-width="1.3"/><g transform="translate(19,861)"><rect x="3.3" y="0.3" width="14" height="15.7" fill="url(#rg)"/><path d="M17 0.5 V15.8 H3.5" fill="none" stroke="#13230f" stroke-width="1.2"/><rect x="5.3" y="2" width="8" height="4.3" fill="#9fd59f" stroke="#3f7f3f" stroke-width="0.8"/><rect x="0" y="0.6" width="2.4" height="1.8" fill="#0a0a0a"/><rect x="2.4" y="0.6" width="0.9" height="1.8" fill="#ffffff"/><rect x="0" y="3.2" width="2.4" height="1.8" fill="#0a0a0a"/><rect x="2.4" y="3.2" width="0.9" height="1.8" fill="#ffffff"/><rect x="0" y="5.8" width="2.4" height="1.8" fill="#0a0a0a"/><rect x="2.4" y="5.8" width="0.9" height="1.8" fill="#ffffff"/><rect x="0" y="8.4" width="2.4" height="1.8" fill="#0a0a0a"/><rect x="2.4" y="8.4" width="0.9" height="1.8" fill="#ffffff"/><rect x="0" y="11.0" width="2.4" height="1.8" fill="#0a0a0a"/><rect x="2.4" y="11.0" width="0.9" height="1.8" fill="#ffffff"/><rect x="0" y="13.6" width="2.4" height="1.8" fill="#0a0a0a"/><rect x="2.4" y="13.6" width="0.9" height="1.8" fill="#ffffff"/></g><g transform="translate(19,891)"><rect x="3.3" y="0.3" width="14" height="15.7" fill="url(#rg)"/><path d="M17 0.5 V15.8 H3.5" fill="none" stroke="#13230f" stroke-width="1.2"/><rect x="5.3" y="2" width="8" height="4.3" fill="#9fd59f" stroke="#3f7f3f" stroke-width="0.8"/><rect x="0" y="0.6" width="2.4" height="1.8" fill="#0a0a0a"/><rect x="2.4" y="0.6" width="0.9" height="1.8" fill="#ffffff"/><rect x="0" y="3.2" width="2.4" height="1.8" fill="#0a0a0a"/><rect x="2.4" y="3.2" width="0.9" height="1.8" fill="#ffffff"/><rect x="0" y="5.8" width="2.4" height="1.8" fill="#0a0a0a"/><rect x="2.4" y="5.8" width="0.9" height="1.8" fill="#ffffff"/><rect x="0" y="8.4" width="2.4" height="1.8" fill="#0a0a0a"/><rect x="2.4" y="8.4" width="0.9" height="1.8" fill="#ffffff"/><rect x="0" y="11.0" width="2.4" height="1.8" fill="#0a0a0a"/><rect x="2.4" y="11.0" width="0.9" height="1.8" fill="#ffffff"/><rect x="0" y="13.6" width="2.4" height="1.8" fill="#0a0a0a"/><rect x="2.4" y="13.6" width="0.9" height="1.8" fill="#ffffff"/></g><g transform="translate(19,921)"><rect x="3.3" y="0.3" width="14" height="15.7" fill="url(#rg)"/><path d="M17 0.5 V15.8 H3.5" fill="none" stroke="#13230f" stroke-width="1.2"/><rect x="5.3" y="2" width="8" height="4.3" fill="#9fd59f" stroke="#3f7f3f" stroke-width="0.8"/><rect x="0" y="0.6" width="2.4" height="1.8" fill="#0a0a0a"/><rect x="2.4" y="0.6" width="0.9" height="1.8" fill="#ffffff"/><rect x="0" y="3.2" width="2.4" height="1.8" fill="#0a0a0a"/><rect x="2.4" y="3.2" width="0.9" height="1.8" fill="#ffffff"/><rect x="0" y="5.8" width="2.4" height="1.8" fill="#0a0a0a"/><rect x="2.4" y="5.8" width="0.9" height="1.8" fill="#ffffff"/><rect x="0" y="8.4" width="2.4" height="1.8" fill="#0a0a0a"/><rect x="2.4" y="8.4" width="0.9" height="1.8" fill="#ffffff"/><rect x="0" y="11.0" width="2.4" height="1.8" fill="#0a0a0a"/><rect x="2.4" y="11.0" width="0.9" height="1.8" fill="#ffffff"/><rect x="0" y="13.6" width="2.4" height="1.8" fill="#0a0a0a"/><rect x="2.4" y="13.6" width="0.9" height="1.8" fill="#ffffff"/></g><g transform="translate(19,951)"><rect x="3.3" y="0.3" width="14" height="15.7" fill="url(#rg)"/><path d="M17 0.5 V15.8 H3.5" fill="none" stroke="#13230f" stroke-width="1.2"/><rect x="5.3" y="2" width="8" height="4.3" fill="#9fd59f" stroke="#3f7f3f" stroke-width="0.8"/><rect x="0" y="0.6" width="2.4" height="1.8" fill="#0a0a0a"/><rect x="2.4" y="0.6" width="0.9" height="1.8" fill="#ffffff"/><rect x="0" y="3.2" width="2.4" height="1.8" fill="#0a0a0a"/><rect x="2.4" y="3.2" width="0.9" height="1.8" fill="#ffffff"/><rect x="0" y="5.8" width="2.4" height="1.8" fill="#0a0a0a"/><rect x="2.4" y="5.8" width="0.9" height="1.8" fill="#ffffff"/><rect x="0" y="8.4" width="2.4" height="1.8" fill="#0a0a0a"/><rect x="2.4" y="8.4" width="0.9" height="1.8" fill="#ffffff"/><rect x="0" y="11.0" width="2.4" height="1.8" fill="#0a0a0a"/><rect x="2.4" y="11.0" width="0.9" height="1.8" fill="#ffffff"/><rect x="0" y="13.6" width="2.4" height="1.8" fill="#0a0a0a"/><rect x="2.4" y="13.6" width="0.9" height="1.8" fill="#ffffff"/></g><g transform="translate(19,981)"><rect x="3.3" y="0.3" width="14" height="15.7" fill="url(#rg)"/><path d="M17 0.5 V15.8 H3.5" fill="none" stroke="#13230f" stroke-width="1.2"/><rect x="5.3" y="2" width="8" height="4.3" fill="#9fd59f" stroke="#3f7f3f" stroke-width="0.8"/><rect x="0" y="0.6" width="2.4" height="1.8" fill="#0a0a0a"/><rect x="2.4" y="0.6" width="0.9" height="1.8" fill="#ffffff"/><rect x="0" y="3.2" width="2.4" height="1.8" fill="#0a0a0a"/><rect x="2.4" y="3.2" width="0.9" height="1.8" fill="#ffffff"/><rect x="0" y="5.8" width="2.4" height="1.8" fill="#0a0a0a"/><rect x="2.4" y="5.8" width="0.9" height="1.8" fill="#ffffff"/><rect x="0" y="8.4" width="2.4" height="1.8" fill="#0a0a0a"/><rect x="2.4" y="8.4" width="0.9" height="1.8" fill="#ffffff"/><rect x="0" y="11.0" width="2.4" height="1.8" fill="#0a0a0a"/><rect x="2.4" y="11.0" width="0.9" height="1.8" fill="#ffffff"/><rect x="0" y="13.6" width="2.4" height="1.8" fill="#0a0a0a"/><rect x="2.4" y="13.6" width="0.9" height="1.8" fill="#ffffff"/></g><g transform="translate(223.3,266) scale(1.07)"><rect x="0.5" y="0.5" width="18" height="16" fill="#eef2fc" stroke="#5b6880" stroke-width="1"/><rect x="0.5" y="0.5" width="18" height="2.8" fill="#cf6c8e"/><path d="M3 5.5 H7.5 M3 10.5 H7.5" stroke="#5b6474" stroke-width="1.1"/><rect x="9.5" y="5" width="5.5" height="2.8" rx="0.8" fill="#dfe7fa" stroke="#5b6474" stroke-width="1"/><rect x="9.5" y="10" width="5.5" height="2.8" rx="0.8" fill="#dfe7fa" stroke="#5b6474" stroke-width="1"/><path d="M18.5 1 V16.5 H1" fill="none" stroke="#2e3b52" stroke-width="1.1"/></g><path d="M331.2 270.2 L341.2 280.2 M341.2 270.2 L331.2 280.2" stroke="#222" stroke-width="1.2"/><path d="M1898.5 269.5 L1909.5 280.5 M1909.5 269.5 L1898.5 280.5" stroke="#333" stroke-width="1.2"/></svg>
<svg class="s" style="left:0;top:0" width="1920" height="1028" viewBox="0 0 1920 1028"><circle cx="1260.7" cy="321" r="6.4" fill="none" stroke="#686868" stroke-width="1.8"/><path d="M1256 325.7 L1250.6 331.3" stroke="#686868" stroke-width="2.2" stroke-linecap="round"/><path d="M1283.4 311.3 H1308.7 L1298.3 323.5 V336.6 H1294.2 V323.5 Z" fill="#828282"/><path d="M1285 312 L1295.5 323.8 V336.5" fill="none" stroke="#d8d8d8" stroke-width="0.9"/><rect x="1352.1" y="311.9" width="25.8" height="25.1" fill="#7b7b7b"/><path d="M1355 313 H1375.5 V324.5 L1373 327.5 H1357.5 L1355 324.5 Z" fill="#ffffff"/><path d="M1359.5 337 V333.5 Q1359.5 330.8 1362 330.8 H1367.5 Q1370 330.8 1370 333.5 V337 Z" fill="#ffffff"/><rect x="1363.5" y="331.5" width="1.5" height="5.5" fill="#7b7b7b"/><rect x="261.9" y="383" width="25.2" height="14" rx="1.2" fill="#ffffff" stroke="#a69ca0" stroke-width="1.3"/><rect x="264.3" y="386.2" width="20.7" height="7.7" fill="#4a7fb5"/><g stroke="#ebc27a" stroke-width="1.4"><path d="M267.00 380.40 L270.00 380.40"/><path d="M266.41 381.81 L268.54 383.94"/><path d="M265.00 382.40 L265.00 385.40"/><path d="M263.59 381.81 L261.46 383.94"/><path d="M263.00 380.40 L260.00 380.40"/><path d="M263.59 378.99 L261.46 376.86"/><path d="M265.00 378.40 L265.00 375.40"/><path d="M266.41 378.99 L268.54 376.86"/></g><circle cx="265" cy="380.4" r="1.8" fill="none" stroke="#ebc27a" stroke-width="1"/><path d="M414.5 383 V396.5 Q414.5 398 416 398 H437.5 Q439 398 439 396.5 V383.5 Q439 382 437.5 382 H422" fill="#ffffff" stroke="#a99ea2" stroke-width="1.3"/><rect x="433" y="384.3" width="4" height="4.8" fill="#4a7fb5"/><path d="M419 391.5 H430 M419 393.5 H430" stroke="#b0a8ab" stroke-width="0.9"/><path d="M416.8 382 V384.5 Q416.8 389.0 421 389.0 Q425.2 389.0 425.2 384.5 V379 Q425.2 375.5 422.3 375.5 Q419.5 375.5 419.5 379 V383.5 Q419.5 386.0 421.2 386.0 Q422.8 386.0 422.8 383.5 V380" fill="none" stroke="#8d8387" stroke-width="1.1"/><rect x="564.5" y="376.5" width="26" height="24" fill="#ffffff" stroke="#6e6a6c" stroke-width="1.1"/><rect x="564.5" y="376.5" width="26" height="4.8" fill="#4a7db3"/><circle cx="571" cy="387.8" r="3.2" fill="#4a7db3"/><path d="M566.2 397.5 Q566 392 571 392 Q576 392 575.9 397.5 Z" fill="#4a7db3"/><rect x="577.3" y="383" width="1.6" height="15.5" fill="#a8a8a8"/><path d="M580 384.5 H586 M580 388.3 H588 M580 392 H588 M580 395.8 H588" stroke="#a8a8a8" stroke-width="1.1"/><path d="M726.8 400.5 V375.5 H752.5" fill="none" stroke="#6b6266" stroke-width="1.3" stroke-dasharray="1.7 2"/><path d="M727 400.5 L752.5 375.5 V400.5 Z" fill="#ffffff" stroke="#6b6266" stroke-width="1.1"/><path d="M745 382.5 L752.5 375.5 V382.5 Z" fill="#4a7db3"/><path d="M738 389.5 H752.5 M734 394.5 H752.5 M738.5 388 V400.5 M745.5 382.5 V400.5" stroke="#b0b0b0" stroke-width="1"/><path d="M224.2 435.6 L234.7 425.1 V435.6 Z" fill="#eceef2"/><path d="M224.2 435.6 L234.7 425.1" stroke="#a8b8cc" stroke-width="0.6"/><path d="M226.3 446 V456.8 M221 451.4 H231.6 M222.6 447.7 L230 455.1 M230 447.7 L222.6 455.1" stroke="#333" stroke-width="1.1"/><path d="M343.1 426.5 H350.1 L346.6 430.5 Z" fill="#222"/><path d="M546.5 426.5 H553.5 L550 430.5 Z" fill="#222"/><path d="M648.0 426.5 H655.0 L651.5 430.5 Z" fill="#222"/><path d="M750.5 426.5 H757.5 L754 430.5 Z" fill="#222"/><path d="M869.3 426.5 H876.3 L872.8 430.5 Z" fill="#222"/><path d="M1005.5 426.5 H1012.5 L1009 430.5 Z" fill="#222"/><path d="M1143.3 426.5 H1150.3 L1146.8 430.5 Z" fill="#222"/><path d="M1242.5 426.5 H1249.5 L1246 430.5 Z" fill="#222"/><path d="M1379.1 426.5 H1386.1 L1382.6 430.5 Z" fill="#222"/><path d="M1424.0 423.2 V428.7 Q1424.0 433.2 1428.2 433.2 Q1432.4 433.2 1432.4 428.7 V420.2 Q1432.4 416.7 1429.5 416.7 Q1426.7 416.7 1426.7 420.2 V427.7 Q1426.7 430.2 1428.4 430.2 Q1430.0 430.2 1430.0 427.7 V421.2" fill="none" stroke="#555" stroke-width="1.1"/><path d="M1415.0 449 V454.8 Q1415.0 459.3 1419.2 459.3 Q1423.4 459.3 1423.4 454.8 V446 Q1423.4 442.5 1420.5 442.5 Q1417.7 442.5 1417.7 446 V453.8 Q1417.7 456.3 1419.4 456.3 Q1421.0 456.3 1421.0 453.8 V447" fill="none" stroke="#1a2a3a" stroke-width="1.2"/><rect x="263" y="989" width="1.5" height="9" fill="#333"/><path d="M271.1 989 V997.8 L266.3 993.4 Z" fill="#333"/><path d="M289.9 989 V997.8 L285 993.4 Z" fill="#bdbdbd"/><path d="M372.2 989 V997.8 L377 993.4 Z" fill="#bdbdbd"/><path d="M391.8 989 V997.8 L396.6 993.4 Z" fill="#333"/><rect x="398.3" y="989" width="1.5" height="9" fill="#333"/><path d="M408.7 989 V997.8 L413.9 993.4 Z" fill="#333"/><g stroke="#f0be7a" stroke-width="1.2"><path d="M421.80 993.30 L424.50 993.30"/><path d="M421.36 994.36 L423.27 996.27"/><path d="M420.30 994.80 L420.30 997.50"/><path d="M419.24 994.36 L417.33 996.27"/><path d="M418.80 993.30 L416.10 993.30"/><path d="M419.24 992.24 L417.33 990.33"/><path d="M420.30 991.80 L420.30 989.10"/><path d="M421.36 992.24 L423.27 990.33"/></g><path d="M444.6 984.3 H463.6 V986.5 L455.8 995 V1003 H452.4 V995 L444.6 986.5 Z" fill="#c8c8c8" stroke="#555" stroke-width="1.1"/><rect x="1784.5" y="1008.5" width="19" height="17" fill="none" stroke="#444" stroke-width="1.1"/><rect x="1784.5" y="1008.5" width="19" height="2.5" fill="#777"/><path d="M1787 1015 H1789.5 M1787 1021.5 H1789.5" stroke="#444" stroke-width="1.1"/><rect x="1792.5" y="1013.5" width="7.5" height="3.5" fill="none" stroke="#444" stroke-width="1"/><rect x="1792.5" y="1019.5" width="7.5" height="3.5" fill="none" stroke="#444" stroke-width="1"/><rect x="1834.5" y="1007.5" width="19" height="18" fill="none" stroke="#444" stroke-width="1.1"/><path d="M1844 1007.5 V1025.5 M1834.5 1016.5 H1853.5" stroke="#444" stroke-width="1.1"/><path d="M1836.5 1010 H1838.5 M1836.5 1019 H1838.5" stroke="#444" stroke-width="1"/><rect x="1846.5" y="1010" width="5" height="3" fill="none" stroke="#444" stroke-width="0.9"/><rect x="1846.5" y="1019" width="5" height="3" fill="none" stroke="#444" stroke-width="0.9"/><path d="M1884.5 1008 L1903.5 1025.5 H1884.5 Z M1897 1008 H1903.5 V1025.5" fill="none" stroke="#444" stroke-width="1.1"/><path d="M1888 1017.5 L1893 1022 H1888 Z" fill="none" stroke="#444" stroke-width="1"/><path d="M1899 1011 H1903 M1900 1014 H1903 M1899 1017 H1903 M1900 1020 H1903" stroke="#444" stroke-width="0.8"/></svg>
</body></html>
